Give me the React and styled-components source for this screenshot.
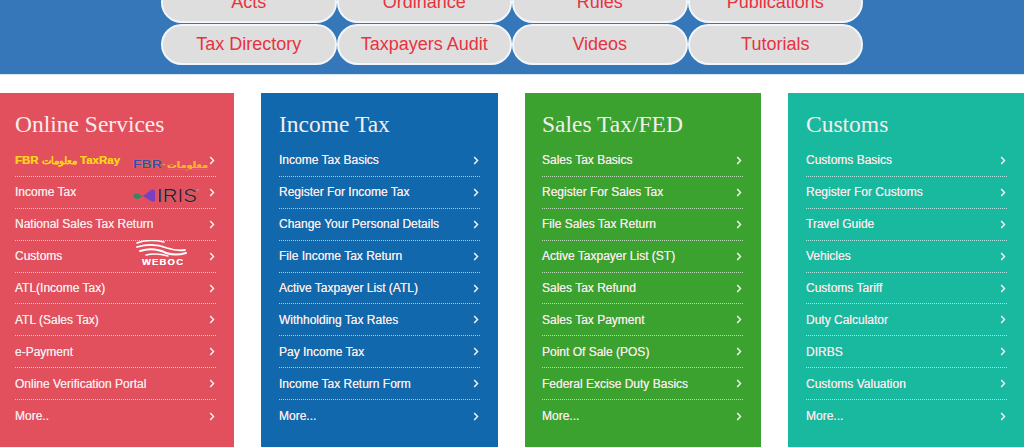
import styled, { createGlobalStyle } from "styled-components";

const GlobalStyle = createGlobalStyle`
  html, body {
    margin: 0;
    padding: 0;
    background: #fff;
    overflow: hidden;
  }
  * { box-sizing: border-box; }
`;

const Page = styled.div`
  width: 1024px;
  height: 447px;
  overflow: hidden;
  font-family: "Liberation Sans", Arial, sans-serif;
`;

const Banner = styled.div`
  height: 75px;
  background: #3577b8;
  border-bottom: 1px solid #d5e8f5;
  overflow: hidden;
`;

const PillGrid = styled.div`
  display: grid;
  grid-template-columns: repeat(4, 175.5px);
  grid-auto-rows: 41px;
  row-gap: 0.5px;
  justify-content: center;
  margin-top: -18px;
`;

const Pill = styled.div`
  display: flex;
  align-items: center;
  justify-content: center;
  background: #dedede;
  border: 2px solid #f2f6fa;
  border-radius: 21px;
  color: #e8323f;
  font-size: 18px;
`;

const Columns = styled.div`
  display: grid;
  grid-template-columns: 237px 237px 236px 237px;
  column-gap: 27px;
  width: 1028px;
  margin: 18px 0 0 -3px;
`;

const Card = styled.section`
  height: 400px;
  padding: 18px 18px 0;
  background: ${(p) => p.$bg};
  color: #fff;

  &:nth-child(3) {
    padding-left: 17px;
  }
`;

const Title = styled.h2`
  margin: 0 0 7px;
  height: 27px;
  font-family: "Liberation Serif", Georgia, serif;
  font-size: 23.5px;
  font-weight: 400;
  line-height: 27px;
  color: #f6ecec;
`;

const List = styled.ul`
  margin: 0;
  padding: 0;
  list-style: none;
`;

const Row = styled.li`
  position: relative;
  display: flex;
  align-items: center;
  justify-content: space-between;
  height: 31.9px;
  padding-right: 1px;
  font-size: ${(p) => (p.$highlight ? "11.5px" : "12px")};
  font-weight: ${(p) => (p.$highlight ? 700 : 400)};
  color: ${(p) => (p.$highlight ? "#ffd11c" : "#f6e8e8")};
  text-shadow: 0 0 0.6px currentColor;
  border-bottom: 1px dotted rgba(255, 255, 255, 0.65);

  &:last-child {
    border-bottom: 0;
  }
`;

const ArabicWord = styled.span`
  font-size: 9.5px;
`;

const Chevron = styled.svg`
  width: 6px;
  height: 9px;
  flex: none;
  color: #f6f0f0;
`;

const Logo = styled.svg`
  position: absolute;
  left: ${(p) => p.$left}px;
  top: ${(p) => p.$top}px;
`;

const FbrLogo = () => (
  <Logo $left={118} $top={10} width="76" height="20" viewBox="0 0 76 20">
    <text x="0" y="13" fontFamily="Liberation Sans" fontWeight="700" fontSize="10" textLength="29" lengthAdjust="spacingAndGlyphs" fill="#3b4aa8">FBR</text>
    <rect x="30" y="9" width="2" height="1" fill="#e8b23a" />
    <text x="34" y="13" fontFamily="DejaVu Sans" fontWeight="700" fontSize="9" textLength="41" lengthAdjust="spacingAndGlyphs" fill="#f5b52c">معلومات</text>
    <rect x="34" y="14" width="41" height="1" fill="#d8703a" />
  </Logo>
);

const IrisLogo = () => (
  <Logo $left={118} $top={11} width="66" height="20" viewBox="0 0 66 20">
    <path d="M0 8c2-3 5-3 7-1l3 1-3 2c-3 2-5 1-7-2z" fill="#2f8a62" />
    <path d="M10 8l8-6c3-1 4 0 4 2v8c0 2-2 2-4 1z" fill="#7b3fc4" />
    <text x="24" y="14" fontFamily="Liberation Sans" fontSize="18" textLength="40" lengthAdjust="spacingAndGlyphs" fill="#3b1c2e">IRIS</text>
    <circle cx="65" cy="2" r="1" fill="#c98a8a" />
  </Logo>
);

const WebocLogo = () => (
  <Logo $left={121} $top={-1} width="52" height="28" viewBox="0 0 52 28">
    <g fill="none" stroke="#fff" strokeLinecap="round">
      <path d="M1 3c8-3 18-3 27-1" strokeWidth="1.6" />
      <path d="M1 7c10-3 20-3 30 1 6 2 12 3 18 2" strokeWidth="1.8" />
      <path d="M4 11c10-3 18-2 26 2 6 2 13 2 20 0" strokeWidth="2" />
      <path d="M10 15c8-2 15-1 22 1" strokeWidth="1.4" />
    </g>
    <text x="6" y="25" fontFamily="Liberation Sans" fontWeight="700" fontSize="9.5" textLength="41" fill="#fff">WEBOC</text>
  </Logo>
);

const pills = [
  "Acts", "Ordinance", "Rules", "Publications",
  "Tax Directory", "Taxpayers Audit", "Videos", "Tutorials",
];

const cards = [
  {
    title: "Online Services",
    bg: "#e2505e",
    items: [
      {
        key: "taxray",
        label: <>FBR <ArabicWord>معلومات</ArabicWord> TaxRay</>,
        highlight: true,
        logo: <FbrLogo />,
      },
      { label: "Income Tax", logo: <IrisLogo /> },
      { label: "National Sales Tax Return" },
      { label: "Customs", logo: <WebocLogo /> },
      { label: "ATL(Income Tax)" },
      { label: "ATL (Sales Tax)" },
      { label: "e-Payment" },
      { label: "Online Verification Portal" },
      { label: "More.." },
    ],
  },
  {
    title: "Income Tax",
    bg: "#1268ad",
    items: [
      "Income Tax Basics", "Register For Income Tax", "Change Your Personal Details",
      "File Income Tax Return", "Active Taxpayer List (ATL)", "Withholding Tax Rates",
      "Pay Income Tax", "Income Tax Return Form", "More...",
    ].map((label) => ({ label })),
  },
  {
    title: "Sales Tax/FED",
    bg: "#3ba22f",
    items: [
      "Sales Tax Basics", "Register For Sales Tax", "File Sales Tax Return",
      "Active Taxpayer List (ST)", "Sales Tax Refund", "Sales Tax Payment",
      "Point Of Sale (POS)", "Federal Excise Duty Basics", "More...",
    ].map((label) => ({ label })),
  },
  {
    title: "Customs",
    bg: "#19b99f",
    items: [
      "Customs Basics", "Register For Customs", "Travel Guide", "Vehicles",
      "Customs Tariff", "Duty Calculator", "DIRBS", "Customs Valuation", "More...",
    ].map((label) => ({ label })),
  },
];

export default function App() {
  return (
    <Page>
      <GlobalStyle />
      <Banner>
        <PillGrid>
          {pills.map((name) => (
            <Pill key={name}>{name}</Pill>
          ))}
        </PillGrid>
      </Banner>
      <Columns>
        {cards.map((card) => (
          <Card key={card.title} $bg={card.bg}>
            <Title>{card.title}</Title>
            <List>
              {card.items.map((item) => (
                <Row key={item.key || item.label} $highlight={item.highlight}>
                  <span>{item.label}</span>
                  {item.logo}
                  <Chevron viewBox="0 0 6 9">
                    <path d="M1.2 1l3.3 3.5L1.2 8" fill="none" stroke="currentColor" strokeWidth="1.5" />
                  </Chevron>
                </Row>
              ))}
            </List>
          </Card>
        ))}
      </Columns>
    </Page>
  );
}
